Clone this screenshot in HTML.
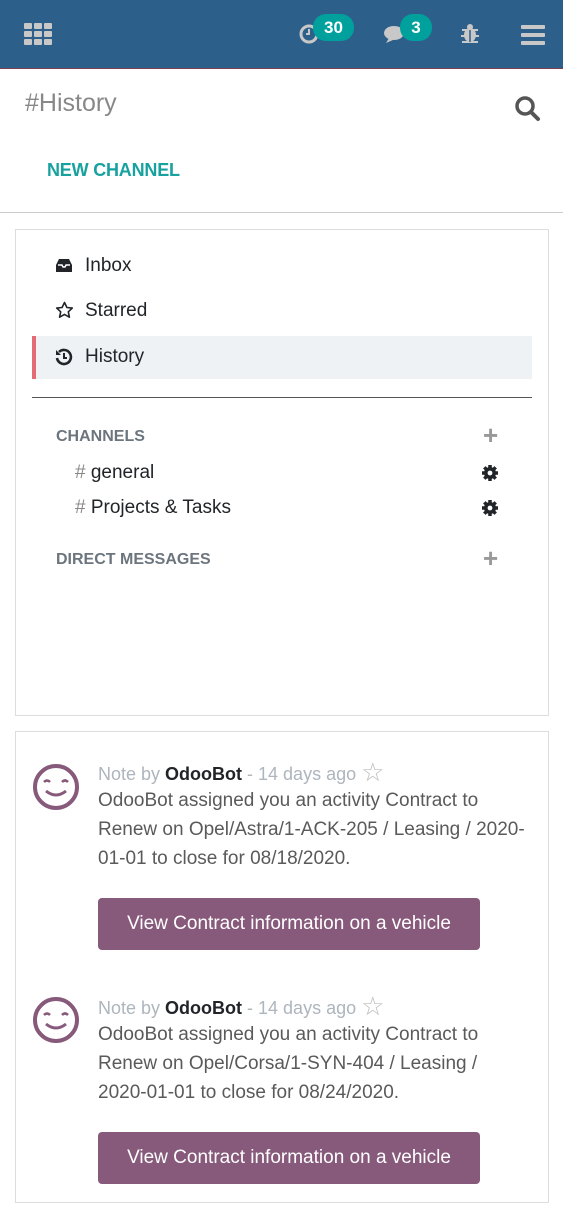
<!DOCTYPE html><html><head><style>
body{margin:0;width:563px;height:1218px;background:#fff;font-family:"Liberation Sans",sans-serif;position:relative;overflow:hidden}
.a{position:absolute}
.top{left:0;top:0;width:563px;height:68px;background:#2d5f8b;border-bottom:1px solid #7a4050}
.badge{background:#00a09d;color:#fff;font-weight:bold;font-size:17px;border-radius:13px;height:27px;line-height:27px;text-align:center}
.item{left:56px;font-size:19px;color:#212529}
.hdr{font-size:16px;font-weight:bold;color:#6c757d}
.msg{left:98px;font-size:19px;color:#5a5a5a;line-height:29px;width:430px}
.btn{left:98px;width:382px;height:52px;background:#875a7b;border-radius:4px;color:#fff;font-size:19px;text-align:center;line-height:52px}
.meta{left:98px;font-size:18px;color:#adb5bd}
.meta b{color:#212529}
.plus{left:483px;font-size:26px;font-weight:bold;color:#999}
</style></head><body>
<div class="a top">
<svg class="a" style="left:24px;top:23px" width="28" height="22"><g fill="#c8c8c8"><rect x="0" y="0" width="8" height="6" rx="1"/><rect x="10" y="0" width="8" height="6" rx="1"/><rect x="20" y="0" width="8" height="6" rx="1"/><rect x="0" y="8" width="8" height="6" rx="1"/><rect x="10" y="8" width="8" height="6" rx="1"/><rect x="20" y="8" width="8" height="6" rx="1"/><rect x="0" y="16" width="8" height="6" rx="1"/><rect x="10" y="16" width="8" height="6" rx="1"/><rect x="20" y="16" width="8" height="6" rx="1"/></g></svg>
<svg class="a" style="left:299px;top:23px" width="22" height="22"><circle cx="10" cy="11" r="8" fill="none" stroke="#c8c8c8" stroke-width="3"/><path d="M10 6v5h-3" stroke="#c8c8c8" stroke-width="2" fill="none"/></svg>
<div class="a badge" style="left:313px;top:14px;width:41px">30</div>
<svg class="a" style="left:383px;top:23px" width="26" height="22"><ellipse cx="11" cy="10" rx="10" ry="7" fill="#c8c8c8"/><path d="M6 15l-3 5 7-3z" fill="#c8c8c8"/></svg>
<div class="a badge" style="left:400px;top:14px;width:32px">3</div>
<svg class="a" style="left:460px;top:22px" width="20" height="22"><g fill="#c8c8c8"><ellipse cx="10" cy="13" rx="6" ry="7"/><circle cx="10" cy="5" r="3"/><path d="M2 8h16M1 14h18M2 20h16" stroke="#c8c8c8" stroke-width="2"/></g><path d="M10 8v12" stroke="#2d5f8b" stroke-width="1.5"/></svg>
<svg class="a" style="left:521px;top:25px" width="24" height="20"><g fill="#c8c8c8"><rect y="0" width="24" height="4" rx="1"/><rect y="8" width="24" height="4" rx="1"/><rect y="16" width="24" height="4" rx="1"/></g></svg>
</div>
<div class="a" style="left:25px;top:89px;font-size:25px;color:#888">#History</div>
<svg class="a" style="left:515px;top:96px" width="26" height="26"><circle cx="10" cy="10" r="8" fill="none" stroke="#555" stroke-width="3.5"/><path d="M16 16l7 7" stroke="#555" stroke-width="4" stroke-linecap="round"/></svg>
<div class="a" style="left:47px;top:160px;font-size:18px;color:#17a2a0;font-weight:bold;letter-spacing:-0.2px">NEW CHANNEL</div>
<div class="a" style="left:0;top:212px;width:563px;height:1px;background:#ccc"></div>
<div class="a" style="left:15px;top:229px;width:532px;height:485px;border:1px solid #ddd"></div>
<svg class="a" style="left:55px;top:258px" width="18" height="15"><path d="M1 7l3-6h10l3 6v7H1z" fill="#212529"/><path d="M3 7h4l1 2h2l1-2h4" stroke="#fff" stroke-width="1.5" fill="none"/></svg>
<div class="a item" style="left:85px;top:255px">Inbox</div>
<svg class="a" style="left:55px;top:301px" width="19" height="19"><path d="M9.5 1.5l2.4 5 5.4.6-4 3.7 1.1 5.4-4.9-2.8-4.9 2.8 1.1-5.4-4-3.7 5.4-.6z" fill="none" stroke="#212529" stroke-width="1.6" stroke-linejoin="round"/></svg>
<div class="a item" style="left:85px;top:300px">Starred</div>
<div class="a" style="left:32px;top:336px;width:500px;height:43px;background:#eff2f5"></div>
<div class="a" style="left:32px;top:336px;width:4px;height:43px;background:#e46b73"></div>
<svg class="a" style="left:55px;top:348px" width="18" height="18"><path d="M4 4A7 7 0 1 1 2 10" fill="none" stroke="#212529" stroke-width="2.6"/><path d="M1 2v5h5z" fill="#212529"/><path d="M9 5v5h3" fill="none" stroke="#212529" stroke-width="2"/></svg>
<div class="a item" style="left:85px;top:346px">History</div>
<div class="a" style="left:32px;top:397px;width:500px;height:1px;background:#555"></div>
<div class="a hdr" style="left:56px;top:428px">CHANNELS</div>
<div class="a plus" style="top:420px">+</div>
<div class="a item" style="left:75px;top:462px"><span style="color:#888">#</span> general</div>
<div class="a item" style="left:75px;top:497px"><span style="color:#888">#</span> Projects &amp; Tasks</div>
<svg class="a" style="left:481px;top:464px" width="18" height="18" viewBox="0 0 18 18"><g fill="#212529"><circle cx="9" cy="9" r="6"/><g stroke="#212529" stroke-width="3.5"><path d="M9 1v16M1 9h16M3.3 3.3l11.4 11.4M14.7 3.3L3.3 14.7"/></g></g><circle cx="9" cy="9" r="2.4" fill="#fff"/></svg>
<svg class="a" style="left:481px;top:499px" width="18" height="18" viewBox="0 0 18 18"><g fill="#212529"><circle cx="9" cy="9" r="6"/><g stroke="#212529" stroke-width="3.5"><path d="M9 1v16M1 9h16M3.3 3.3l11.4 11.4M14.7 3.3L3.3 14.7"/></g></g><circle cx="9" cy="9" r="2.4" fill="#fff"/></svg>
<div class="a hdr" style="left:56px;top:551px">DIRECT MESSAGES</div>
<div class="a plus" style="top:543px">+</div>
<div class="a" style="left:15px;top:731px;width:532px;height:470px;border:1px solid #ddd"></div>

<svg class="a" style="left:32px;top:763px" width="48" height="48"><circle cx="24" cy="24" r="21" fill="none" stroke="#875a7b" stroke-width="4"/><path d="M12 19q3-3 6 0M30 19q3-3 6 0" stroke="#875a7b" stroke-width="2.5" fill="none"/><path d="M14 28q10 8 20 0" stroke="#875a7b" stroke-width="3" fill="none"/></svg>
<div class="a meta" style="top:756px">Note by <b>OdooBot</b> - 14 days ago <span style="font-size:26px;color:#bbb;position:relative;top:1px">☆</span></div>
<div class="a msg" style="top:786px">OdooBot assigned you an activity Contract to Renew on Opel/Astra/1-ACK-205 / Leasing / 2020-01-01 to close for 08/18/2020.</div>
<div class="a btn" style="top:898px">View Contract information on a vehicle</div>

<svg class="a" style="left:32px;top:996px" width="48" height="48"><circle cx="24" cy="24" r="21" fill="none" stroke="#875a7b" stroke-width="4"/><path d="M12 19q3-3 6 0M30 19q3-3 6 0" stroke="#875a7b" stroke-width="2.5" fill="none"/><path d="M14 28q10 8 20 0" stroke="#875a7b" stroke-width="3" fill="none"/></svg>
<div class="a meta" style="top:990px">Note by <b>OdooBot</b> - 14 days ago <span style="font-size:26px;color:#bbb;position:relative;top:1px">☆</span></div>
<div class="a msg" style="top:1020px">OdooBot assigned you an activity Contract to Renew on Opel/Corsa/1-SYN-404 / Leasing / 2020-01-01 to close for 08/24/2020.</div>
<div class="a btn" style="top:1132px">View Contract information on a vehicle</div>
</body></html>
